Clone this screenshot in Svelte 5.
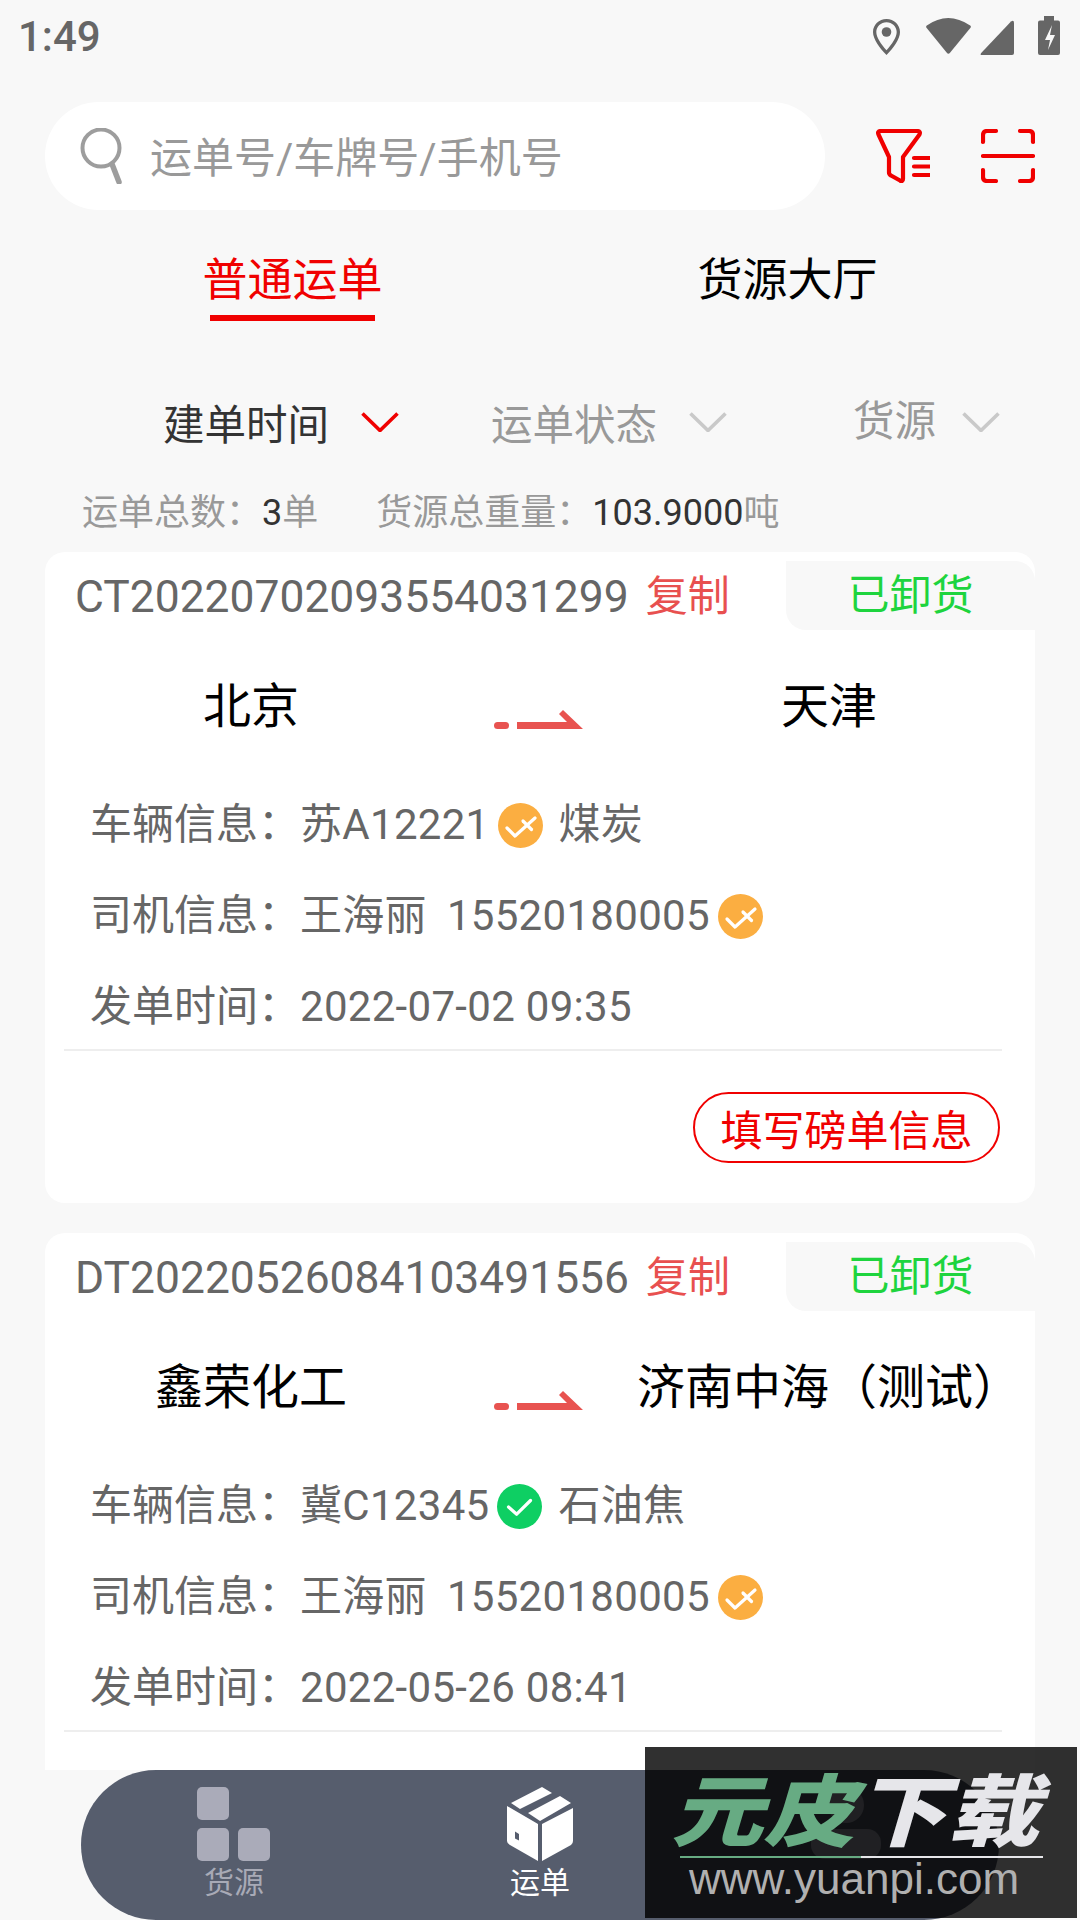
<script>
  const orders = [
    {
      no: "CT20220702093554031299",
      from: "北京",
      to: "天津",
      plate: "苏A12221",
      plateOk: false,
      goods: "煤炭",
      driver: "王海丽",
      phone: "15520180005",
      time: "2022-07-02 09:35",
      action: "填写磅单信息"
    },
    {
      no: "DT20220526084103491556",
      from: "鑫荣化工",
      to: "济南中海（测试）",
      plate: "冀C12345",
      plateOk: true,
      goods: "石油焦",
      driver: "王海丽",
      phone: "15520180005",
      time: "2022-05-26 08:41",
      action: null
    }
  ];
</script>

{#snippet badge(ok)}
  <svg class="badge" viewBox="0 0 45 45">
    {#if ok}
      <circle cx="22.5" cy="22.5" r="22.5" fill="#0ecf63" />
      <path d="M11.5 23l8.2 7.2L33.5 16.5" fill="none" stroke="#fff" stroke-width="3.2" stroke-linecap="round" stroke-linejoin="round" />
    {:else}
      <circle cx="22.5" cy="22.5" r="22.5" fill="#fbae41" />
      <path d="M9 25l8 8L37 15" fill="none" stroke="#fff" stroke-width="3.2" stroke-linecap="round" stroke-linejoin="round" />
      <path d="M25 18l8.5 8.5" fill="none" stroke="#fff" stroke-width="3.2" stroke-linecap="round" />
    {/if}
  </svg>
{/snippet}

{#snippet chevron(color)}
  <svg class="chevron" viewBox="0 0 38 20">
    <path d="M1.5 1.5L19 18.5 36.5 1.5" fill="none" stroke={color} stroke-width="3.6" />
  </svg>
{/snippet}

<div class="page">
  <div class="status">
    <span class="clock">1:49</span>
    <svg class="status-icons" viewBox="870 14 192 42">
      <path fill-rule="evenodd" fill="#666" d="M886.5 18c7.5 0 13.5 5.800 13.500 13 0 7-6.500 16-13.500 23-7-7-13.500-16-13.500-23 0-7.200 6-13 13.500-13zm0 3.200c-5.600 0-10.200 4.400-10.200 9.800 0 5.200 4.700 12.300 10.200 18.200 5.500-5.900 10.200-13 10.200-18.200 0-5.400-4.600-9.800-10.200-9.800z" />
      <circle cx="886.500" cy="31" r="4.800" fill="#666" />
      <path fill="#666" d="M926.800 24.500Q948 9.500 970.200 24.500q1.200 1 .3 2.200L950 51.800q-1.700 1.800-3.200 0L926.500 26.700q-.9-1.200.3-2.200z" />
      <path fill="#666" d="M1011 20.500q3-1.800 3 1.500v30q0 2-2 2h-30q-2.500 0-.8-2z" />
      <path fill-rule="evenodd" fill="#666" d="M1044 15h10v4.500h4q2 0 2 2V52q0 2-2 2h-18q-2 0-2-2V21.500q0-2 2-2h4zM1052 24l-7 15h5l-2 10 7-15h-5z" />
    </svg>
  </div>

  <div class="search-row">
    <div class="search">
      <svg class="search-icon" viewBox="0 0 44 56">
        <circle cx="21" cy="20" r="18.500" fill="none" stroke="#9d9d9d" stroke-width="4" />
        <path d="M32 36l7 18" fill="none" stroke="#9d9d9d" stroke-width="5.500" stroke-linecap="round" />
      </svg>
      <span class="placeholder">运单号/车牌号/手机号</span>
    </div>
    <svg class="tool" viewBox="0 0 54 54">
      <path d="M5 2h36q4 0 2.500 3.500L27 28v22q0 3-3 1.500l-9-5q-2-1-2-3V28L2.500 5.500Q1 2 5 2z" fill="none" stroke="#f00000" stroke-width="4.200" stroke-linejoin="round" />
      <path d="M38 29h15M38 37.500h15M38 46h15" fill="none" stroke="#f00000" stroke-width="4.200" stroke-linecap="round" />
    </svg>
    <svg class="tool scan" viewBox="0 0 54 54">
      <path d="M2 13V6q0-4 4-4h9M39 2h9q4 0 4 4v7M2 41v7q0 4 4 4h9M39 52h9q4 0 4-4v-7" fill="none" stroke="#f00000" stroke-width="4.200" stroke-linecap="round" />
      <path d="M2 27h50" fill="none" stroke="#f00000" stroke-width="4.200" stroke-linecap="round" />
    </svg>
  </div>

  <div class="tabs">
    <div class="tab active"><span>普通运单</span><i></i></div>
    <div class="tab"><span>货源大厅</span></div>
  </div>

  <div class="filters">
    <div class="filter on"><span>建单时间</span>{@render chevron("#f00000")}</div>
    <div class="filter"><span>运单状态</span>{@render chevron("#c9c9c9")}</div>
    <div class="filter last"><span>货源</span>{@render chevron("#c9c9c9")}</div>
  </div>

  <div class="totals">
    <span>运单总数：<b>3</b>单</span>
    <span>货源总重量：<b>103.9000</b>吨</span>
  </div>

  <div class="list">
    {#each orders as o}
      <div class="card">
        <div class="card-head">
          <span class="order-no">{o.no}</span>
          <span class="copy">复制</span>
          <span class="state">已卸货</span>
        </div>
        <div class="route">
          <span>{o.from}</span>
          <svg class="arrow" viewBox="0 0 89 19">
            <rect x="0" y="12" width="15" height="7" rx="3.500" fill="#e85350" />
            <path d="M23 12h50l-8-8 4-4 20 19H23z" fill="#e85350" />
          </svg>
          <span>{o.to}</span>
        </div>
        <div class="rows">
          <div class="row">
            <span class="label">车辆信息：</span>
            <span>{o.plate}</span>
            {@render badge(o.plateOk)}
            <span class="goods">{o.goods}</span>
          </div>
          <div class="row">
            <span class="label">司机信息：</span>
            <span>{o.driver}</span>
            <span class="phone">{o.phone}</span>
            {@render badge(false)}
          </div>
          <div class="row">
            <span class="label">发单时间：</span>
            <span>{o.time}</span>
          </div>
        </div>
        <div class="divider"></div>
        <div class="actions">
          {#if o.action}
            <button>{o.action}</button>
          {/if}
        </div>
      </div>
    {/each}
  </div>

  <nav class="nav">
    <div class="nav-item">
      <svg viewBox="0 0 74 74" class="nav-icon">
        <rect x="0" y="0" width="32" height="33" rx="5" fill="#aaabb9" />
        <rect x="0" y="41" width="32" height="33" rx="5" fill="#aaabb9" />
        <rect x="41" y="41" width="32" height="33" rx="5" fill="#aaabb9" />
      </svg>
      <span>货源</span>
    </div>
    <div class="nav-item current">
      <svg viewBox="0 0 66 74" class="nav-icon">
        <path fill="#fff" d="M35 0l10 6-32 16-9-6zM53 9l11 7-31 18-12-8z" />
        <path fill="#fff" fill-rule="evenodd" d="M0 19l31 18v37L3 58q-3-1.500-3-4zM8 44.500v7l4 2v-6.500z" />
        <path fill="#fff" d="M66 21v33q0 2.500-2 4L35 74V37z" />
      </svg>
      <span>运单</span>
    </div>
    <div class="nav-item">
      <svg viewBox="0 0 74 74" class="nav-icon">
        <circle cx="37" cy="18" r="18" fill="#aaabb9" />
        <rect x="2" y="42" width="70" height="30" rx="14" fill="#aaabb9" />
      </svg>
    </div>
  </nav>

  <div class="watermark">
    <div class="wm-title"><span class="green">元皮</span><span>下载</span></div>
    <div class="wm-line"></div>
    <div class="wm-url">www.yuanpi.com</div>
  </div>
</div>

<style>
  :global(body) {
    margin: 0;
  }
  .page {
    position: relative;
    width: 1080px;
    height: 1920px;
    overflow: hidden;
    display: flex;
    flex-direction: column;
    background: #f8f8f8;
    font-family: Roboto, "Noto Sans CJK SC", sans-serif;
    font-size: 42px;
    color: #666;
  }

  .status {
    flex: none;
    height: 72px;
    display: flex;
    align-items: center;
    justify-content: space-between;
    padding: 0 18px;
  }
  .clock {
    font-size: 42px;
    font-weight: 500;
    color: #666;
  }
  .status-icons {
    width: 192px;
    height: 42px;
  }

  .search-row {
    flex: none;
    display: flex;
    align-items: center;
    margin-top: 30px;
    padding-left: 45px;
    height: 108px;
  }
  .search {
    width: 780px;
    height: 108px;
    border-radius: 54px;
    background: #fff;
    display: flex;
    align-items: center;
    padding-left: 35px;
    box-sizing: border-box;
  }
  .search-icon {
    width: 44px;
    height: 56px;
  }
  .placeholder {
    margin-left: 26px;
    padding-bottom: 4px;
    color: #999;
  }
  .tool {
    width: 54px;
    height: 54px;
    margin-left: 51px;
  }
  .scan {
    margin-left: 51px;
  }

  .tabs {
    flex: none;
    display: grid;
    grid-template-columns: 495px 495px;
    padding-left: 45px;
    margin-top: 38px;
    font-size: 45px;
    color: #000;
  }
  .tab {
    display: flex;
    flex-direction: column;
    align-items: center;
    height: 73px;
  }
  .tab span {
    line-height: 66px;
  }
  .tab i {
    display: block;
    width: 165px;
    height: 6px;
    margin-top: 1px;
    background: #f00000;
  }
  .active {
    color: #f00000;
  }

  .filters {
    flex: none;
    display: flex;
    align-items: center;
    height: 60px;
    margin-top: 71px;
    padding-left: 163px;
    font-size: 41.5px;
    color: #999;
  }
  .filter {
    display: flex;
    align-items: center;
    margin-left: 92px;
  }
  .filter:first-child {
    margin-left: 0;
  }
  .filter.on {
    color: #333;
  }
  .filter.last {
    margin-left: 126px;
    padding-bottom: 8px;
  }
  .chevron {
    width: 38px;
    height: 20px;
    margin-left: 32px;
  }
  .filter.last .chevron {
    margin-left: 26px;
    margin-top: 8px;
  }

  .totals {
    flex: none;
    display: flex;
    align-items: center;
    gap: 58px;
    height: 50px;
    margin-top: 32px;
    padding-left: 82px;
    font-size: 36px;
    color: #999;
  }
  .totals b {
    font-weight: 400;
    color: #333;
  }

  .list {
    flex: 1;
    min-height: 0;
    overflow: hidden;
    margin-top: 18px;
    padding: 0 45px;
  }
  .card {
    background: #fff;
    border-radius: 20px;
    margin-bottom: 30px;
  }
  .card-head {
    display: flex;
    align-items: flex-start;
    height: 78px;
  }
  .order-no {
    margin: 12px 0 0 30px;
    line-height: 66px;
    font-size: 44.4px;
  }
  .copy {
    margin: 12px 0 0 17px;
    line-height: 66px;
    color: #e8504f;
  }
  .state {
    margin: 9px 0 0 auto;
    width: 249px;
    height: 69px;
    line-height: 69px;
    text-align: center;
    background: #f8f8f8;
    border-radius: 0 20px 0 20px;
    color: #1ed43e;
  }

  .route {
    display: grid;
    grid-template-columns: 412px 166px 412px;
    justify-items: center;
    align-items: center;
    height: 70px;
    margin-top: 37px;
    font-size: 48px;
    color: #000;
  }
  .arrow {
    width: 89px;
    height: 19px;
    margin-top: 34px;
    margin-left: -3px;
  }

  .rows {
    margin-top: 39px;
    padding-left: 45px;
  }
  .row {
    display: flex;
    align-items: center;
    box-sizing: border-box;
    height: 91px;
    padding-top: 7px;
    line-height: 56px;
    letter-spacing: 0.3px;
  }
  .label {
    flex: none;
    width: 210px;
    white-space: nowrap;
    letter-spacing: 0;
  }
  .badge {
    width: 45px;
    height: 45px;
    margin-left: 8px;
  }
  .goods {
    margin-left: 16px;
  }
  .phone {
    margin-left: 20px;
  }

  .divider {
    height: 2px;
    margin: 0 33px 0 19px;
    background: #eee;
  }
  .actions {
    display: flex;
    justify-content: flex-end;
    min-height: 71px;
    padding: 41px 35px 40px 0;
  }
  button {
    width: 307px;
    height: 71px;
    padding: 0;
    border: 2px solid #f00000;
    border-radius: 36px;
    background: #fff;
    font: inherit;
    color: #f00000;
  }

  .nav {
    flex: none;
    height: 150px;
    margin: 0 81px;
    display: grid;
    grid-template-columns: repeat(3, 306px);
    border-radius: 75px;
    background: #565d6d;
    font-size: 30px;
    color: #a8aab6;
  }
  .nav-item {
    display: flex;
    flex-direction: column;
    align-items: center;
    padding-top: 17px;
  }
  .nav-icon {
    height: 74px;
    width: 74px;
  }
  .nav-item span {
    line-height: 36px;
    margin-top: 4px;
  }
  .current {
    color: #fff;
  }

  .watermark {
    position: absolute;
    left: 645px;
    top: 1747px;
    width: 432px;
    height: 171px;
    background: rgba(0, 0, 0, 0.81);
    display: flex;
    flex-direction: column;
    align-items: center;
  }
  .wm-title {
    margin: 25px 0 0 -12px;
    font-size: 92px;
    line-height: 84px;
    font-weight: 900;
    font-style: italic;
    color: #e6e6ea;
    white-space: nowrap;
    transform: scaleY(0.85);
  }
  .green {
    color: #67ab83;
  }
  .wm-line {
    width: 363px;
    height: 2px;
    background: linear-gradient(to right, #67ab83 50%, #e6e6ea 50%);
  }
  .wm-url {
    margin: -4px 0 0 -14px;
    font-family: "Liberation Sans", sans-serif;
    font-size: 44px;
    line-height: 50px;
    color: #b0b0b0;
  }
</style>
